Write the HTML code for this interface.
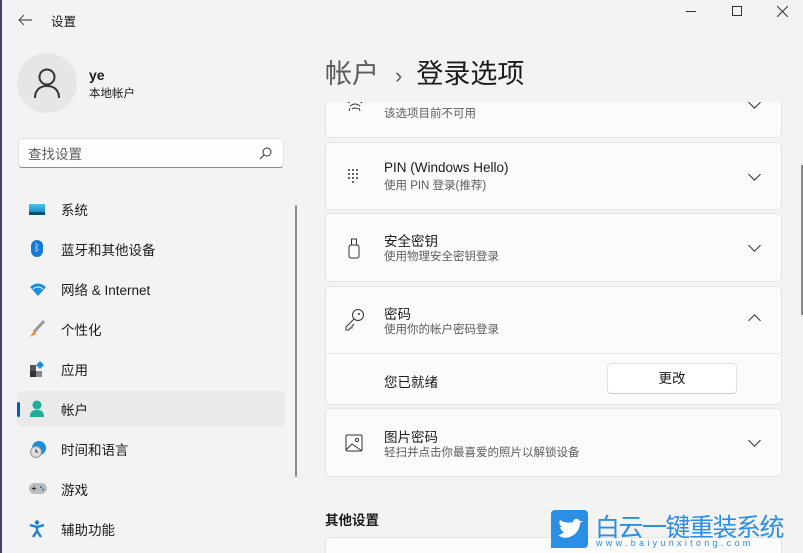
<!DOCTYPE html>
<html><head><meta charset="utf-8"><style>
*{margin:0;padding:0;box-sizing:border-box}
html,body{width:803px;height:553px;overflow:hidden}
body{background:#f3f3f3;font-family:"Liberation Sans","Noto Sans CJK SC",sans-serif;color:#1b1b1b;position:relative;font-size:14px}
.a{position:absolute}
.card{position:absolute;left:325px;width:457px;background:#fbfbfb;border:1px solid #e5e5e5;border-radius:5px}
.t{position:absolute;left:58px;font-size:13.5px;color:#1b1b1b}
.s{position:absolute;left:58px;font-size:11.5px;color:#5d5d5d}
.chev{position:absolute;left:424px;width:9px;height:9px;border-right:1.3px solid #333;border-bottom:1.3px solid #333;transform:rotate(45deg)}
.nav{position:absolute;left:61px;font-size:13.5px;color:#1b1b1b}
.ic{position:absolute;left:29px}
</style></head><body>
<div class="card" style="top:80px;height:58px"><svg class="a" style="left:20px;top:18px" width="18" height="14"><path d="M2 4q7-6 14 0M4 7q5-4 10 0M6 10q3-2 6 0M3 12l1-3M14 12l-1-3" stroke="#333" fill="none"/></svg><div class="s" style="top:24px">该选项目前不可用</div><div class="chev" style="top:17px"></div></div>
<div class="a" style="left:305px;top:0;width:498px;height:102px;background:#f3f3f3"></div>
<div class="a" style="left:0;top:0;width:2px;height:553px;background:#4a4063"></div>
<svg class="a" style="left:17px;top:13px" width="16" height="14"><path d="M15 7H2M7 2L2 7l5 5" stroke="#555" stroke-width="1.2" fill="none"/></svg>
<div class="a" style="left:51px;top:11px;font-size:12.5px">设置</div>
<div class="a" style="left:686px;top:11px;width:10px;height:1px;background:#333"></div>
<div class="a" style="left:732px;top:6px;width:10px;height:10px;border:1px solid #333"></div>
<svg class="a" style="left:777px;top:6px" width="11" height="11"><path d="M0 0L11 11M11 0L0 11" stroke="#333"/></svg>
<div class="a" style="left:17px;top:53px;width:60px;height:60px;border-radius:50%;background:#e6e6e6"></div>
<svg class="a" style="left:33px;top:67px" width="28" height="32"><circle cx="14" cy="10" r="7.5" stroke="#333" stroke-width="2" fill="none"/><path d="M2 31c0-8 5-12 12-12s12 4 12 12" stroke="#333" stroke-width="2" fill="none"/></svg>
<div class="a" style="left:89px;top:67px;font-size:14px;font-weight:bold">ye</div>
<div class="a" style="left:89px;top:85px;font-size:11.5px">本地帐户</div>
<div class="a" style="left:18px;top:138px;width:266px;height:30px;background:#fdfdfd;border:1px solid #e3e3e3;border-bottom:1px solid #8a8a8a;border-radius:4px"></div>
<div class="a" style="left:28px;top:143px;font-size:13.5px;color:#5f5f5f">查找设置</div>
<svg class="a" style="left:259px;top:146px" width="14" height="14"><circle cx="8" cy="6" r="4" stroke="#333" fill="none"/><path d="M5 9L1 13" stroke="#333"/></svg>
<div class="a" style="left:17px;top:391px;width:268px;height:36px;background:#eaeaea;border-radius:5px"></div>
<div class="a" style="left:17px;top:402px;width:3px;height:15px;background:#005fb8;border-radius:2px"></div>
<div class="a" style="left:295px;top:205px;width:2px;height:272px;background:#8a8a8a;border-radius:1px"></div>
<div class="ic" style="top:204px;width:16px;height:11px;background:linear-gradient(#4cc2e8,#1a8fc4);border-bottom:3px solid #0c4c73"></div>
<div class="ic" style="top:240px;width:12px;height:17px;left:31px;background:#1478d4;border-radius:6px;color:#fff;font-size:10px;text-align:center;line-height:17px">ᛒ</div>
<svg class="ic" style="top:283px" width="18" height="13"><path d="M1 4q8-7 16 0L9 13z" fill="#1a8fe0"/><path d="M4 6q5-4 10 0" stroke="#fff" fill="none"/></svg>
<svg class="ic" style="top:320px" width="16" height="18"><path d="M15 1L5 12" stroke="#999" stroke-width="3"/><path d="M5 11l-4 6 6-3z" fill="#f08a24"/></svg>
<svg class="ic" style="top:361px" width="16" height="16"><rect x="1" y="4" width="6" height="6" fill="#555"/><rect x="1" y="10" width="6" height="6" fill="#333"/><rect x="7" y="10" width="6" height="6" fill="#888"/><path d="M11 0l4 4-4 4-4-4z" fill="#1a8fe0"/></svg>
<svg class="ic" style="top:400px" width="16" height="18"><circle cx="8" cy="5" r="4.5" fill="#1dae9c"/><path d="M1 17c0-6 3-7 7-7s7 1 7 7z" fill="#1dae9c"/></svg>
<svg class="ic" style="top:440px" width="18" height="18"><circle cx="10" cy="8" r="7" fill="#1a8fe0"/><circle cx="7" cy="12" r="5.5" fill="#ddd" stroke="#999"/><path d="M7 9v3h2" stroke="#333" fill="none"/></svg>
<svg class="ic" style="top:483px" width="18" height="12"><rect x="0" y="0" width="18" height="11" rx="5.5" fill="#bbb"/><path d="M3 5.5h4M5 3.5v4" stroke="#333"/><circle cx="12" cy="4" r="1" fill="#1a6fd0"/><circle cx="14" cy="6.5" r="1" fill="#1a6fd0"/></svg>
<svg class="ic" style="top:520px" width="16" height="18"><circle cx="8" cy="2.5" r="2.2" fill="#1a7fd6"/><path d="M1 5l7 2 7-2M8 7v4l-4 6M8 11l4 6" stroke="#1a7fd6" stroke-width="2.4" fill="none"/></svg>
<div class="nav" style="top:199px">系统</div>
<div class="nav" style="top:239px">蓝牙和其他设备</div>
<div class="nav" style="top:279px">网络 &amp; Internet</div>
<div class="nav" style="top:319px">个性化</div>
<div class="nav" style="top:359px">应用</div>
<div class="nav" style="top:399px">帐户</div>
<div class="nav" style="top:439px">时间和语言</div>
<div class="nav" style="top:479px">游戏</div>
<div class="nav" style="top:519px">辅助功能</div>
<div class="card" style="top:142px;height:68px"><svg class="a" style="left:21px;top:25px" width="14" height="18"><g fill="#333"><circle cx="2" cy="2" r="1"/><circle cx="6" cy="2" r="1"/><circle cx="10" cy="2" r="1"/><circle cx="2" cy="6" r="1"/><circle cx="6" cy="6" r="1"/><circle cx="10" cy="6" r="1"/><circle cx="2" cy="10" r="1"/><circle cx="6" cy="10" r="1"/><circle cx="10" cy="10" r="1"/><circle cx="6" cy="14" r="1"/></g></svg><div class="t" style="top:17px">PIN (Windows Hello)</div><div class="s" style="top:34px">使用 PIN 登录(推荐)</div><div class="chev" style="top:27px"></div></div>
<div class="card" style="top:213px;height:69px"><svg class="a" style="left:21px;top:24px" width="14" height="22"><rect x="2" y="7" width="10" height="13" rx="2" stroke="#333" fill="none"/><rect x="4.5" y="1" width="5" height="6" stroke="#333" fill="none"/></svg><div class="t" style="top:16px">安全密钥</div><div class="s" style="top:34px">使用物理安全密钥登录</div><div class="chev" style="top:27px"></div></div>
<div class="card" style="top:286px;height:119px"><svg class="a" style="left:18px;top:21px" width="22" height="24"><circle cx="14" cy="7" r="5.5" stroke="#333" fill="none"/><circle cx="15" cy="6" r="1" fill="#333"/><path d="M10 11L2 19v3h3l1-2h2v-2l2-2" stroke="#333" fill="none"/></svg><div class="t" style="top:16px">密码</div><div class="s" style="top:34px">使用你的帐户密码登录</div><div class="chev" style="top:29px;transform:rotate(225deg)"></div><div class="a" style="left:0;top:66px;width:455px;height:1px;background:#e8e8e8"></div><div class="t" style="top:84px">您已就绪</div><div class="a" style="left:281px;top:76px;width:130px;height:31px;background:#fff;border:1px solid #e2e2e2;border-bottom-color:#ccc;border-radius:4px;text-align:center;line-height:29px;font-size:13.5px">更改</div></div>
<div class="card" style="top:408px;height:69px"><svg class="a" style="left:19px;top:25px" width="18" height="18"><rect x="1" y="1" width="16" height="16" rx="1.5" stroke="#333" fill="none"/><path d="M1 16l6-6 10 7" stroke="#333" fill="none"/><circle cx="12" cy="6" r="1.6" stroke="#333" fill="none"/></svg><div class="t" style="top:17px">图片密码</div><div class="s" style="top:35px">轻扫并点击你最喜爱的照片以解锁设备</div><div class="chev" style="top:27px"></div></div>
<div class="a" style="left:325px;top:509px;font-size:13.5px;font-weight:bold">其他设置</div>
<div class="card" style="top:537px;height:30px"></div>
<div class="a" style="left:325px;top:52px;font-size:27px;color:#1b1b1b;white-space:nowrap"><span style="color:#5c5c5c">帐户</span><span style="color:#5c5c5c;margin:0 14px 0 16px;font-size:22px">›</span>登录选项</div>
<div class="a" style="left:801px;top:165px;width:2px;height:150px;background:#8a8a8a"></div>
<div class="a" style="left:551px;top:510px;width:37px;height:38px;background:#2b8fe6;border-radius:4px 4px 4px 0"></div>
<svg class="a" style="left:556px;top:518px" width="28" height="24"><path d="M2 17q8 6 17-1 5-5 5-11l3-2-3 0-2-2q-4-1-5 3Q10 6 4 2q-2 4 2 7l-2 0q1 4 4 5-3 3-6 3z" fill="#fff"/></svg>
<div class="a" style="left:595px;top:508px;font-size:25px;color:#2b8fe6;letter-spacing:-1.5px;white-space:nowrap">白云一键重装系统</div>
<div class="a" style="left:596px;top:538px;font-size:9px;color:#2b8fe6;letter-spacing:3.3px;white-space:nowrap">www.baiyunxitong.com</div>
</body></html>
